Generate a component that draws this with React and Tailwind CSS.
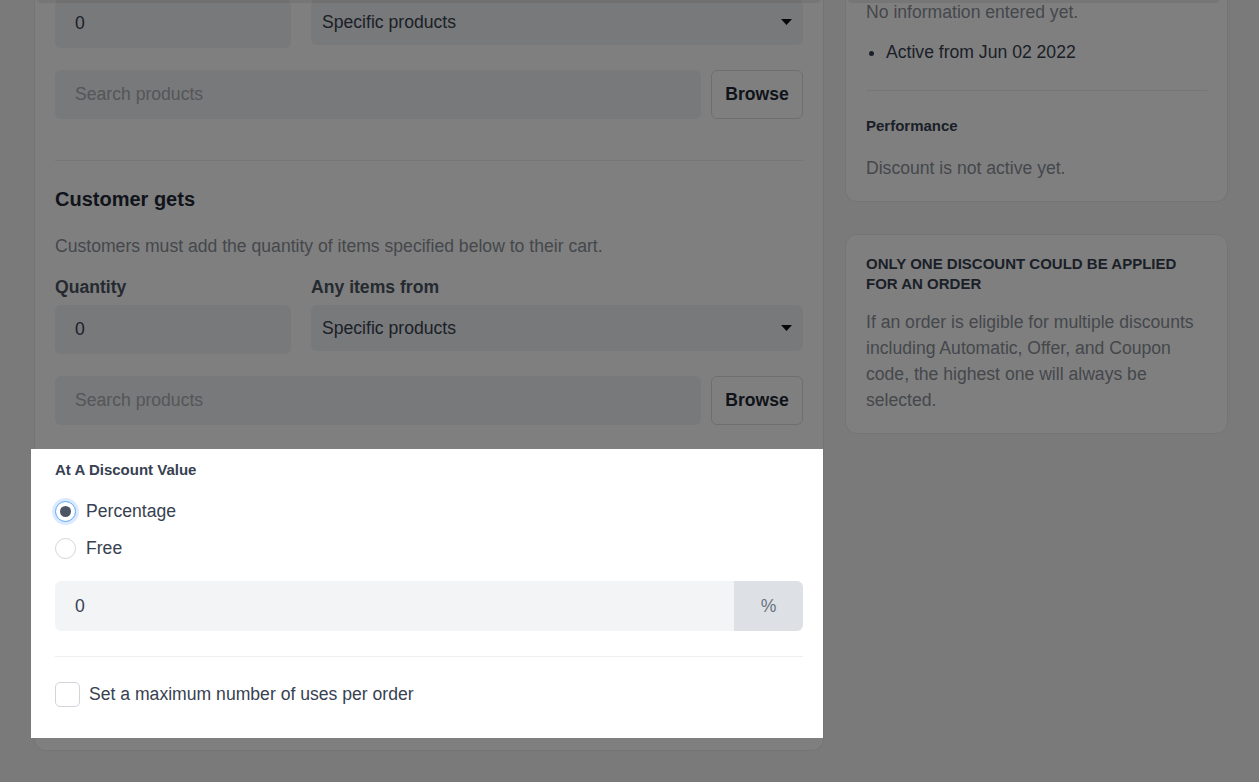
import React from 'react'

const font = { fontFamily: '"Liberation Sans", Arial, sans-serif' }

// ── small pieces ─────────────────────────────────────────────────────────────
function TextBox({ value, placeholder, className = '' }) {
  return (
    <div className={`flex items-center rounded-md bg-[#f1f2f4] px-5 text-[17.6px] ${className}`}>
      {value != null ? <span className="text-[#374151]">{value}</span> : <span className="text-[#a9adb3]">{placeholder}</span>}
    </div>
  )
}

function SelectBox({ label }) {
  return (
    <div className="flex h-[46px] items-center justify-between rounded-md bg-[#f1f2f4] px-[11px] text-[17.6px] text-[#374151]">
      <span>{label}</span>
      <svg width="11" height="6" viewBox="0 0 11 6"><path d="M0 0h11L5.5 6z" fill="#111" /></svg>
    </div>
  )
}

function SearchRow({ className = '' }) {
  return (
    <div className={`flex gap-[10px] ${className}`}>
      <TextBox placeholder="Search products" className="h-[49px] flex-1" />
      <button className="h-[49px] w-[92px] rounded-md border border-[#dcdde0] bg-white text-[17.6px] font-bold text-[#1f2937]">Browse</button>
    </div>
  )
}

function QtyRow({ className = '' }) {
  return (
    <div className={`grid grid-cols-[236px_1fr] items-start gap-5 ${className}`}>
      <TextBox value="0" className="h-[49px]" />
      <SelectBox label="Specific products" />
    </div>
  )
}

// ── highlighted section (tour spotlight) ─────────────────────────────────────
function DiscountValue() {
  return (
    <div className="relative z-20 mt-[35px]">
      <div className="absolute -z-10 top-[-11px] bottom-[-31px] left-[-24px] right-[-20px] bg-white shadow-[0_0_0_9999px_rgba(0,0,0,0.5)]" />
      <h4 className="text-[15px] font-bold leading-5 text-[#374151]">At A Discount Value</h4>
      <label className="mt-[19px] flex h-6 items-center gap-[10px] text-[17.6px] text-[#374151]">
        <span className="flex h-[21px] w-[21px] items-center justify-center rounded-full border border-[#60a5fa] bg-white ring-[3px] ring-[#dbeafe]">
          <span className="h-[11px] w-[11px] rounded-full bg-[#4b5563]" />
        </span>
        Percentage
      </label>
      <label className="mt-[13px] flex h-6 items-center gap-[10px] text-[17.6px] text-[#374151]">
        <span className="h-[21px] w-[21px] rounded-full border border-[#d1d5db] bg-white" />
        Free
      </label>
      <div className="mt-[21px] flex h-[50px] overflow-hidden rounded-md">
        <div className="flex flex-1 items-center bg-[#f3f4f6] px-5 text-[17.6px] text-[#374151]">0</div>
        <div className="flex w-[69px] items-center justify-center bg-[#dde0e4] text-[17.6px] text-[#6b7280]">%</div>
      </div>
      <div className="mt-[25px] h-px bg-[#eeeff2]" />
      <label className="mt-[25px] flex h-[25px] items-center gap-[9px] text-[17.6px] text-[#374151]">
        <span className="h-[25px] w-[25px] rounded-[5px] border border-[#d1d5db] bg-white" />
        Set a maximum number of uses per order
      </label>
    </div>
  )
}

// ── columns ──────────────────────────────────────────────────────────────────
function MainCard() {
  return (
    <div className="relative -mt-px w-[790px] rounded-b-xl border border-t-0 border-[#e8e8e8] bg-white px-5 pb-[43px]">
      <div className="absolute left-[2px] right-[2px] top-0 h-[4px] rounded-b-md bg-black/[0.07]" />
      <QtyRow />
      <SearchRow className="mt-[22px]" />
      <div className="mt-[41px] h-px bg-[#ececec]" />
      <h3 className="mt-[26px] text-[20px] font-bold leading-6 text-[#1f2937]">Customer gets</h3>
      <p className="mt-[23px] text-[17.6px] leading-6 text-[#8a8f98]">Customers must add the quantity of items specified below to their cart.</p>
      <div className="mt-[17px] grid grid-cols-[236px_1fr] gap-5 text-[17.6px] font-bold leading-6 text-[#4b5563]">
        <span>Quantity</span>
        <span>Any items from</span>
      </div>
      <QtyRow className="mt-[6px]" />
      <SearchRow className="mt-[22px]" />
      <DiscountValue />
    </div>
  )
}

function SideColumn() {
  return (
    <div className="flex w-[383px] flex-col gap-8">
      <div className="relative rounded-b-xl border border-t-0 border-[#e8e8e8] bg-white px-5 pb-[21px]">
        <div className="absolute left-[2px] right-[8px] top-0 h-[3px] rounded-b-md bg-black/[0.07]" />
        <p className="text-[17.6px] leading-6 text-[#8a8f98]">No information entered yet.</p>
        <ul className="mt-4 list-disc pl-5 text-[17.6px] leading-6 text-[#374151]">
          <li>Active from Jun 02 2022</li>
        </ul>
        <div className="mt-[26px] h-px bg-[#ececec]" />
        <h4 className="mt-[25px] text-[15px] font-bold leading-5 text-[#374151]">Performance</h4>
        <p className="mt-5 text-[17.6px] leading-6 text-[#8a8f98]">Discount is not active yet.</p>
      </div>
      <div className="rounded-xl border border-[#e8e8e8] bg-white px-5 pb-5 pt-[19px]">
        <h4 className="text-[15px] font-bold uppercase leading-5 text-[#374151]">Only one discount could be applied for an order</h4>
        <p className="mt-[15px] text-[17.6px] leading-[26px] text-[#8a8f98]">
          If an order is eligible for multiple discounts including Automatic, Offer, and Coupon code, the highest one will always be selected.
        </p>
      </div>
    </div>
  )
}

export default function App() {
  return (
    <div style={font} className="relative h-[782px] overflow-hidden bg-[#f5f5f5]">
      <div className="flex items-start gap-[21px] pl-[34px]">
        <MainCard />
        <SideColumn />
      </div>
    </div>
  )
}
